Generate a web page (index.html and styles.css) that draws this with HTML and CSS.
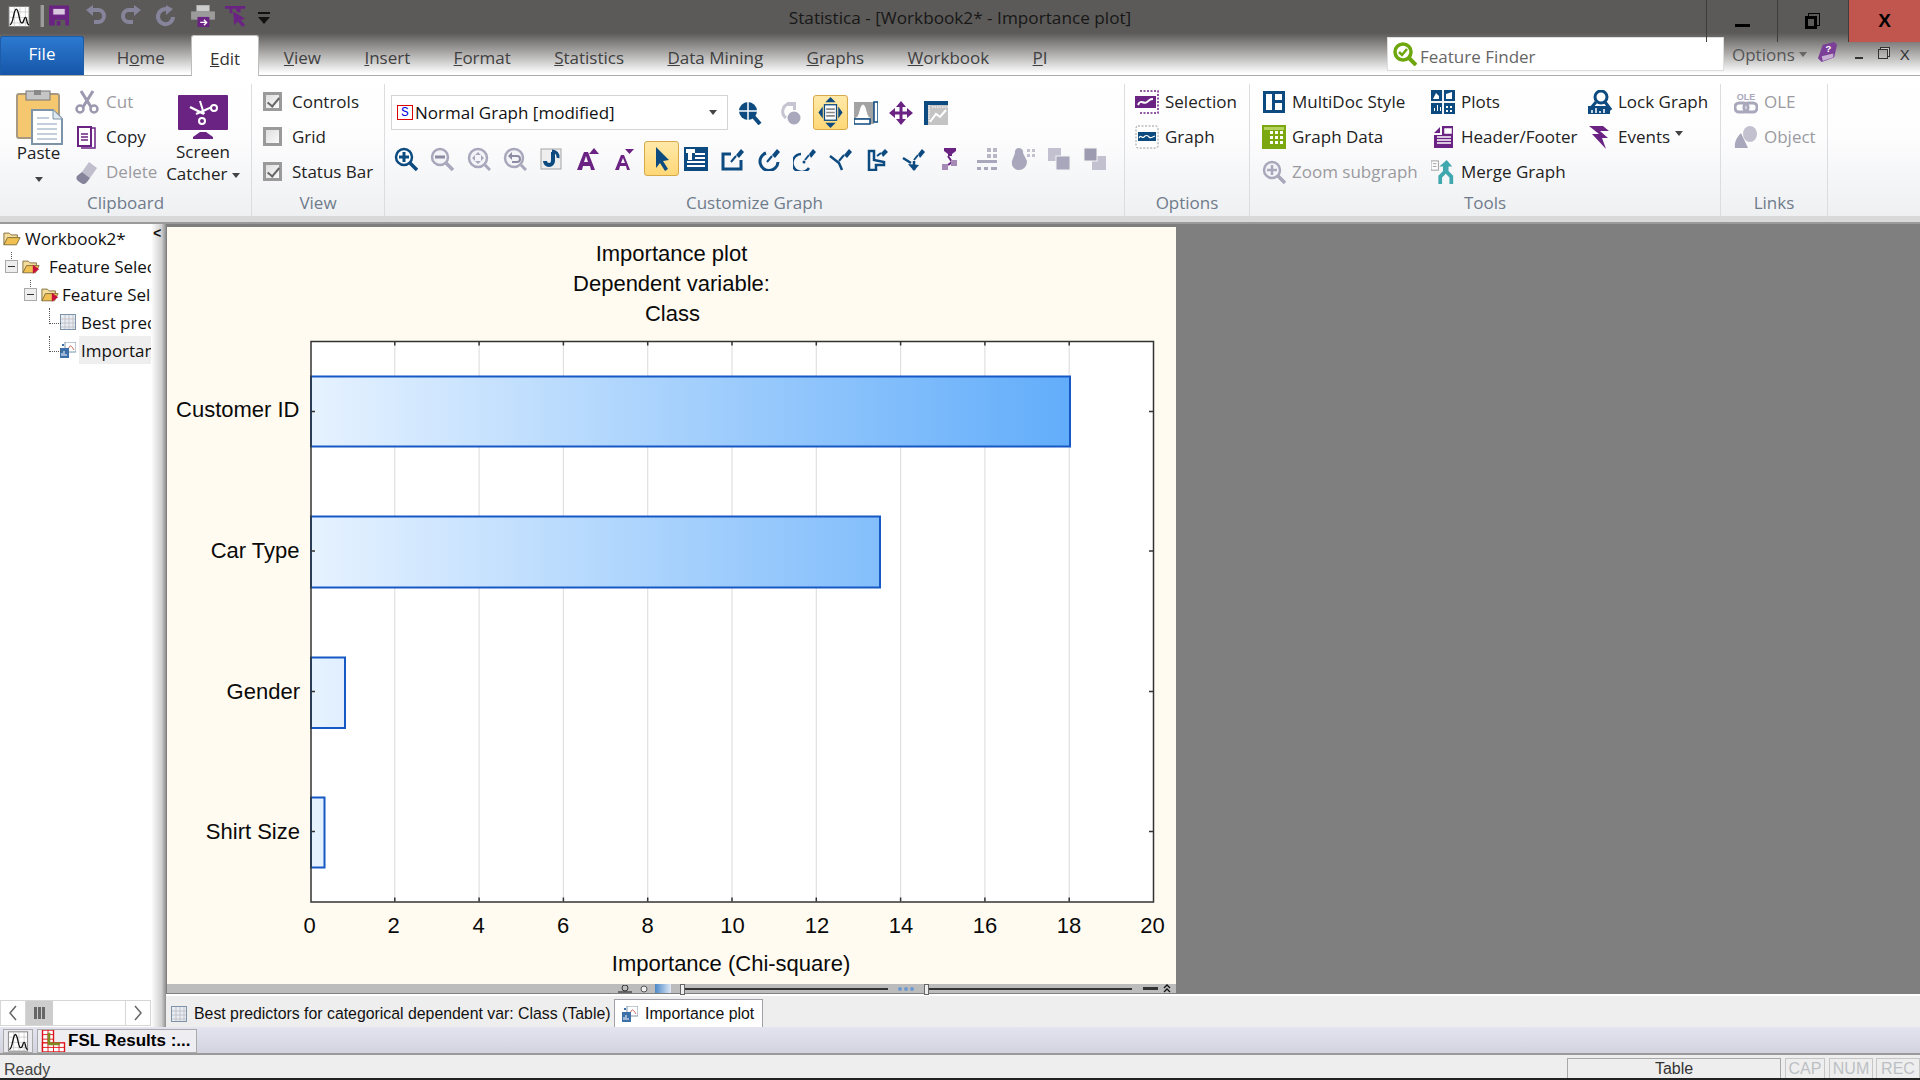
FILE: index.html
```html
<!DOCTYPE html>
<html lang="en">
<head>
    <meta charset="UTF-8">
    <title>Statistica - [Workbook2* - Importance plot]</title>
    <link rel="stylesheet" href="styles.css">
</head>
<body>

<!-- icon sheet -->
<svg class="icon-sheet" xmlns="http://www.w3.org/2000/svg">
    <defs>
        <symbol id="i-logo" viewBox="0 0 24 24"><rect x="1" y="1" width="22" height="22" fill="#fff" stroke="#777"/><path d="M1 7h22M1 13h22M1 19h22M7 1v22M13 1v22M19 1v22" stroke="#bbb" stroke-width=".7"/><path d="M2 21c4 0 4-17 7-17s3 15 6 15 2-6 4-6 1 8 4 8" fill="none" stroke="#111" stroke-width="1.5"/></symbol>
        <symbol id="i-save" viewBox="0 0 22 22"><path d="M0 0h21v21h-4v-6H6v6H0z" fill="#6a2382"/><rect x="4" y="3" width="13" height="7" fill="#d9c8e0" stroke="#6a2382"/><rect x="8" y="16" width="4" height="5" fill="#6a2382"/></symbol>
        <symbol id="i-undo" viewBox="0 0 22 22"><path d="M6 5h7a6 6 0 0 1 0 12H9" fill="none" stroke="#86849a" stroke-width="4"/><path d="M8 0v11L1 5z" fill="#86849a"/></symbol>
        <symbol id="i-redo" viewBox="0 0 22 22"><path d="M16 5H9a6 6 0 0 0 0 12h4" fill="none" stroke="#86849a" stroke-width="4"/><path d="M14 0v11l7-6z" fill="#86849a"/></symbol>
        <symbol id="i-refresh" viewBox="0 0 22 22"><path d="M14 5a7.500 7.500 0 1 0 4 7" fill="none" stroke="#86849a" stroke-width="4"/><path d="M11 0v10l7-6z" fill="#86849a"/></symbol>
        <symbol id="i-print" viewBox="0 0 26 24"><rect x="6" y="0" width="14" height="7" fill="#ccc" stroke="#999"/><rect x="0" y="7" width="26" height="9" fill="#9b9b9b"/><rect x="7" y="13" width="13" height="11" fill="#6a2382"/><path d="M10 19h6M14 16l3 3-3 3" stroke="#fff" stroke-width="1.500" fill="none"/></symbol>
        <symbol id="i-catch" viewBox="0 0 24 24"><path d="M0 1h22v3h-5v4h-3l-2-2v-2H8v5H5V4H0z" fill="#6a2382"/><path d="M9 7l13 8-5 1 5 6-3 2-5-6-4 4z" fill="#6a2382"/></symbol>
        <symbol id="i-drop" viewBox="0 0 14 14"><rect x="1" y="1" width="12" height="2" fill="#111"/><path d="M1 6h12l-6 7z" fill="#111"/></symbol>
        <symbol id="i-cut" viewBox="0 0 24 24"><path d="M6 1l10 16M18 1L8 17" stroke="#9b98b0" stroke-width="3"/><circle cx="5" cy="19" r="3.500" fill="#fff" stroke="#9b98b0" stroke-width="2.500"/><circle cx="19" cy="19" r="3.500" fill="#fff" stroke="#9b98b0" stroke-width="2.500"/></symbol>
        <symbol id="i-copy" viewBox="0 0 24 24"><path d="M6 3h14v20H6" fill="none" stroke="#6a2382" stroke-width="1.500"/><path d="M3 2h9l4 0v19H3z" fill="#fff" stroke="#6a2382" stroke-width="2"/><path d="M6 9h7M6 12h7M6 15h7" stroke="#6a2382" stroke-width="1.500"/></symbol>
        <symbol id="i-delete" viewBox="0 0 24 24"><path d="M14 2l8 6-7 10-8-6z" fill="#c0bdcc"/><path d="M7 12l8 6-3 4a4 4 0 0 1-6 1l-3-2a4 4 0 0 1-1-5z" fill="#86849a"/></symbol>
        <symbol id="i-paste" viewBox="0 0 48 55"><rect x="2" y="4" width="42" height="44" rx="2" fill="#f5c870" stroke="#a89a80" stroke-width="2"/><rect x="11" y="1" width="24" height="9" fill="#c5c5c5" stroke="#777"/><rect x="19" y="0" width="7" height="5" fill="#888"/><path d="M17 20h21l9 9v25H17z" fill="#fff" stroke="#7d94a8" stroke-width="2"/><path d="M38 20v9h9" fill="#dfe8ef" stroke="#7d94a8"/><path d="M22 28h12M22 34h20M22 39h20M22 44h20M22 49h20" stroke="#c3cfdb" stroke-width="2"/></symbol>
        <symbol id="i-screen" viewBox="0 0 50 44"><rect x="0" y="0" width="50" height="35" rx="1" fill="#6a2382"/><path d="M22 6l4 13M34 12l-16 7" stroke="#fff" stroke-width="2"/><path d="M12 12l14 7" stroke="#fff" stroke-width="2.500"/><circle cx="36" cy="13" r="3" fill="#6a2382" stroke="#fff" stroke-width="2"/><circle cx="24" cy="26" r="3" fill="#6a2382" stroke="#fff" stroke-width="2"/><path d="M22 37h6l7 5v2H15v-2z" fill="#6a2382"/></symbol>
        <symbol id="i-zoomin" viewBox="0 0 24 24"><circle cx="10" cy="10" r="8" fill="#fff" stroke="#0d4a80" stroke-width="2.500"/><path d="M10 5v10M5 10h10" stroke="#0d4a80" stroke-width="3"/><path d="M16 16l7 7" stroke="#0d4a80" stroke-width="3.500"/></symbol>
        <symbol id="i-zoomout" viewBox="0 0 24 24"><circle cx="10" cy="10" r="8" fill="#f4f4f8" stroke="#a9a7bb" stroke-width="2.500"/><path d="M5 10h10" stroke="#8d8ba2" stroke-width="3"/><path d="M16 16l7 7" stroke="#a9a7bb" stroke-width="3.500"/></symbol>
        <symbol id="i-zoomfit" viewBox="0 0 24 24"><circle cx="11" cy="11" r="9" fill="#f4f4f8" stroke="#a9a7bb" stroke-width="2.500"/><path d="M11 5l3 3h-6zM11 17l3-3h-6zM5 11l3-3v6zM17 11l-3-3v6z" fill="#a9a7bb"/><path d="M18 18l5 5" stroke="#a9a7bb" stroke-width="3"/></symbol>
        <symbol id="i-zoomback" viewBox="0 0 24 24"><circle cx="11" cy="11" r="9" fill="#f4f4f8" stroke="#a9a7bb" stroke-width="2.500"/><path d="M7 9h7a3 3 0 0 1 0 6H9" fill="none" stroke="#8d8ba2" stroke-width="2"/><path d="M9 5v8L5 9z" fill="#8d8ba2"/><path d="M18 18l5 5" stroke="#a9a7bb" stroke-width="3"/></symbol>
        <symbol id="i-hook" viewBox="0 0 24 24"><rect x="2" y="2" width="20" height="20" fill="#eee" stroke="#a5a5a5"/><path d="M14 5v9a4 4 0 0 1-8 0" fill="none" stroke="#0d4a80" stroke-width="4"/><path d="M13 4a6 6 0 0 1 6 7" fill="none" stroke="#0d4a80" stroke-width="3"/></symbol>
        <symbol id="i-aup" viewBox="0 0 24 24"><path d="M18 1l5 6H13z" fill="#6a2382"/><path d="M1 23L8 5h4l7 18h-4l-1-4H7l-1 4zM8 15h4l-2-6z" fill="#6a2382" fill-rule="evenodd"/></symbol>
        <symbol id="i-adown" viewBox="0 0 24 24"><path d="M13 2h9l-4.500 5z" fill="#6a2382"/><path d="M3 23L9 8h3l6 15h-3l-1-4H8l-1 4zM9 16h4l-2-5z" fill="#6a2382" fill-rule="evenodd"/></symbol>
        <symbol id="i-arrow" viewBox="0 0 24 24"><path d="M6 0l13 13-6 1 5 8-3 2-5-8-4 5z" fill="#0d4a80"/></symbol>
        <symbol id="i-textbox" viewBox="0 0 24 24"><rect x="0" y="0" width="24" height="24" fill="#0d4a80"/><path d="M3 3h7v2H7v7H5V5H3zM11 7h10M11 11h10M3 15h18M3 19h18" stroke="#fff" stroke-width="2" fill="#fff"/></symbol>
        <symbol id="i-rect" viewBox="0 0 24 24"><path d="M10 7H2v15h18v-9" fill="none" stroke="#0d4a80" stroke-width="3"/><path d="M10 15l5-6" stroke="#0d4a80" stroke-width="2"/><path d="M15 8l5-6 3 3-5 6z" fill="#0d4a80"/></symbol>
        <symbol id="i-circle" viewBox="0 0 24 24"><path d="M9 6a9 9 0 1 0 12 9" fill="none" stroke="#0d4a80" stroke-width="3"/><path d="M10 15l5-6" stroke="#0d4a80" stroke-width="2"/><path d="M15 8l5-6 3 3-5 6z" fill="#0d4a80"/></symbol>
        <symbol id="i-arc" viewBox="0 0 24 24"><path d="M8 7a9 9 0 1 0 8 14" fill="none" stroke="#0d4a80" stroke-width="2.500"/><circle cx="11" cy="15" r="1.500" fill="#0d4a80"/><path d="M12 13l4-5" stroke="#0d4a80" stroke-width="2"/><path d="M16 7l4-5 3 3-5 6z" fill="#0d4a80"/></symbol>
        <symbol id="i-line" viewBox="0 0 24 24"><path d="M1 9l9 7 3 7" fill="none" stroke="#0d4a80" stroke-width="2.500"/><path d="M10 14l5-6" stroke="#0d4a80" stroke-width="2"/><path d="M15 8l5-6 3 3-5 6z" fill="#0d4a80"/></symbol>
        <symbol id="i-poly" viewBox="0 0 24 24"><path d="M3 4h5v9l10 2v3l-8 0v5H3z" fill="none" stroke="#0d4a80" stroke-width="2.500"/><path d="M11 9l4-3" stroke="#0d4a80" stroke-width="2"/><path d="M15 6l4-4 3 3-5 5z" fill="#0d4a80"/></symbol>
        <symbol id="i-arrowline" viewBox="0 0 24 24"><path d="M1 11l8 5M12 23V14" fill="none" stroke="#0d4a80" stroke-width="2.500"/><path d="M6 17l6 7 5-6z" fill="#0d4a80"/><path d="M12 13l4-5" stroke="#0d4a80" stroke-width="2"/><path d="M16 7l4-5 3 3-5 6z" fill="#0d4a80"/></symbol>
        <symbol id="i-group" viewBox="0 0 24 24"><path d="M6 1h12v3l-4 3v2h-4V7L6 4z" fill="#6a2382"/><path d="M10 9l4 6-4 3" fill="none" stroke="#6a2382" stroke-width="2"/><rect x="4" y="17" width="6" height="6" fill="#a58bb5"/><rect x="13" y="13" width="6" height="6" fill="#a58bb5"/></symbol>
        <symbol id="i-align" viewBox="0 0 24 24"><rect x="12" y="1" width="4" height="4" fill="#b9b7c6"/><rect x="18" y="1" width="4" height="4" fill="#b9b7c6"/><rect x="12" y="7" width="4" height="4" fill="#b9b7c6"/><rect x="18" y="7" width="4" height="4" fill="#b9b7c6"/><rect x="2" y="13" width="20" height="3" fill="#a9a7bb"/><path d="M2 20h4v3H2zM9 20h4v3H9zM16 20h6v3h-6z" fill="#a9a7bb"/></symbol>
        <symbol id="i-lasso" viewBox="0 0 24 24"><path d="M8 1a4 4 0 0 1 4 5l4 8c0 6-4 9-8 9s-8-3-7-9l3-8a4 4 0 0 1 4-5z" fill="#a9a7bb"/><path d="M16 2h3v3h-3zM21 2h3v3h-3zM16 7h3v3h-3zM21 7h3v3h-3z" fill="#c3c1cf"/></symbol>
        <symbol id="i-front" viewBox="0 0 24 24"><rect x="1" y="1" width="13" height="13" fill="#c3c1cf"/><rect x="9" y="9" width="14" height="14" fill="#a9a7bb" stroke="#f4f4f4"/></symbol>
        <symbol id="i-back" viewBox="0 0 24 24"><rect x="9" y="9" width="14" height="14" fill="#c3c1cf"/><rect x="1" y="1" width="13" height="13" fill="#9d9bb0" stroke="#f4f4f4"/></symbol>
        <symbol id="i-points" viewBox="0 0 24 24"><circle cx="10" cy="10" r="9" fill="#0d4a80"/><path d="M10 1v18M1 10h18" stroke="#fff" stroke-width="1.500"/><path d="M15 15l7 8" stroke="#0d4a80" stroke-width="4"/></symbol>
        <symbol id="i-gray-rot" viewBox="0 0 24 24"><path d="M9 3a8 8 0 0 0-2 14" fill="none" stroke="#c7c5d2" stroke-width="3"/><path d="M8 1h9v8h-3V5H8z" fill="#c7c5d2"/><circle cx="15" cy="17" r="6.500" fill="#a9a7bb"/></symbol>
        <symbol id="i-move" viewBox="0 0 28 36"><path d="M14 0l6 6H8zM14 36l-6-6h12z" fill="#0d4a80"/><path d="M5 11v14l-5-7zM23 11v14l5-7z" fill="#0d4a80"/><rect x="7" y="9" width="14" height="18" fill="#fff" stroke="#0d4a80" stroke-width="1.500"/><path d="M9 14h10M9 18h10M9 22h10" stroke="#888" stroke-width="2"/></symbol>
        <symbol id="i-plotbox" viewBox="0 0 24 24"><rect x="0" y="1" width="20" height="22" fill="#a3a3a3"/><path d="M2 17c4 0 4-13 7-13s3 13 7 13" fill="#fff" stroke="#fff" stroke-width="1"/><rect x="0" y="18" width="16" height="5" fill="#fff" stroke="#0d4a80" stroke-width="1.500"/><rect x="20" y="1" width="4" height="20" fill="#fff" stroke="#0d4a80" stroke-width="1.500"/></symbol>
        <symbol id="i-cross" viewBox="0 0 24 24"><path d="M12 0l5 6H7zM12 24l-5-6h10zM0 12l6-5v10zM24 12l-6-5v10z" fill="#6a2382"/><path d="M12 4v16M4 12h16" stroke="#6a2382" stroke-width="3"/></symbol>
        <symbol id="i-area" viewBox="0 0 24 24"><rect x="0" y="0" width="24" height="24" fill="#0d4a80"/><rect x="4" y="4" width="20" height="20" fill="#c4c4c4"/><path d="M5 4v16M8 6h16" stroke="#fff" stroke-width="1" stroke-dasharray="1.500 1"/><path d="M6 21l6-8 4 3 6-7" fill="none" stroke="#fff" stroke-width="2"/></symbol>
        <symbol id="i-select" viewBox="0 0 24 24"><rect x="0" y="6" width="21" height="12" fill="#6a2382"/><path d="M3 15c3-7 5 0 9-3s3-3 6-3" fill="none" stroke="#fff" stroke-width="2"/><path d="M5 1h18v22H5" fill="none" stroke="#6a2382" stroke-width="1.500" stroke-dasharray="2 1.500"/></symbol>
        <symbol id="i-graph" viewBox="0 0 24 24"><rect x="1" y="1" width="22" height="22" rx="2" fill="#fff" stroke="#999" stroke-dasharray="2 1.500"/><rect x="3" y="7" width="18" height="9" fill="#0d4a80"/><path d="M4 13c2-4 3 1 5-1s3-2 5 0 3 0 6-1" fill="none" stroke="#fff" stroke-width="1.200"/></symbol>
        <symbol id="i-multidoc" viewBox="0 0 24 24"><rect x="1" y="1" width="22" height="22" fill="#0d4a80"/><rect x="4" y="4" width="6" height="16" fill="#fff"/><rect x="13" y="4" width="7" height="6" fill="#fff"/><rect x="13" y="13" width="7" height="7" fill="#fff"/></symbol>
        <symbol id="i-gdata" viewBox="0 0 24 24"><rect x="0" y="0" width="24" height="24" fill="#7ba811"/><rect x="2" y="2" width="20" height="3" fill="#b6d25e"/><path d="M8 6h3v3H8zM13 6h3v3h-3zM18 6h3v3h-3zM8 11h3v3H8zM13 11h3v3h-3zM18 11h3v3h-3zM8 16h3v3H8zM13 16h3v3h-3zM18 16h3v3h-3z" fill="#fff"/></symbol>
        <symbol id="i-zoomsub" viewBox="0 0 24 24"><circle cx="10" cy="10" r="8" fill="#f4f4f8" stroke="#a9a7bb" stroke-width="2.500"/><path d="M10 5v10M5 10h10" stroke="#a9a7bb" stroke-width="2.500"/><path d="M16 16l7 7" stroke="#a9a7bb" stroke-width="3.500"/></symbol>
        <symbol id="i-plots" viewBox="0 0 24 24"><rect x="0" y="0" width="24" height="24" fill="#0d4a80"/><path d="M11 0h2v24h-2zM0 11h24v2H0z" fill="#f3f3f5"/><path d="M2 9l3-6 3 3V9zM15 4l6-2v7h-6zM3 21v-3h1v3zM6 21v-6h1v6zM9 21v-4h1v4zM15 16h2v2h-2zM19 16h2v2h-2zM15 20h2v2h-2zM19 20h2v2h-2z" fill="#fff"/></symbol>
        <symbol id="i-header" viewBox="0 0 24 24"><path d="M3 8L9 2v6zM11 1h11v22H3V10h8z" fill="#6a2382"/><path d="M14 4h6v4h-6zM6 12h14M6 15h14M6 18h14" stroke="#fff" fill="#fff" stroke-width="1.500"/></symbol>
        <symbol id="i-merge" viewBox="0 0 26 26"><rect x="0" y="1" width="8" height="10" fill="#fff" stroke="#999"/><path d="M2 4h4M2 7h4" stroke="#999"/><path d="M17 0l6 7h-4v5l5 5v9h-4v-7l-4-4-4 4v7H8v-9l5-5V7H9z" fill="#3fa7ae"/></symbol>
        <symbol id="i-lock" viewBox="0 0 24 24"><circle cx="13" cy="7" r="6" fill="#fff" stroke="#0d4a80" stroke-width="3"/><path d="M8 12l-5 6M17 12l6 8" stroke="#0d4a80" stroke-width="3"/><rect x="0" y="16" width="22" height="8" fill="#0d4a80"/><path d="M4 23v-3M8 23v-5M12 23v-2M16 23v-4" stroke="#fff" stroke-width="1.500"/></symbol>
        <symbol id="i-events" viewBox="0 0 24 24"><path d="M1 1h14l6 5-9 0 8 7-6 0 4 11-14-15h7z" fill="#6a2382"/></symbol>
        <symbol id="i-ole" viewBox="0 0 24 24"><text x="12" y="10" text-anchor="middle" class="icon-text">OLE</text><rect x="1" y="13" width="13" height="9" rx="4" fill="none" stroke="#a9a7bb" stroke-width="3"/><rect x="10" y="13" width="13" height="9" rx="4" fill="none" stroke="#a9a7bb" stroke-width="3"/></symbol>
        <symbol id="i-object" viewBox="0 0 24 24"><path d="M7 8l7 15H1c-1-6 2-11 6-15z" fill="#a9a7bb"/><ellipse cx="16" cy="9" rx="7" ry="8" fill="#c3c1cf"/></symbol>
        <symbol id="i-finder" viewBox="0 0 24 24"><circle cx="10" cy="10" r="8" fill="#fff" stroke="#6ea60e" stroke-width="3.500"/><path d="M6 10l3 3 5-6" fill="none" stroke="#6ea60e" stroke-width="2.500"/><path d="M16 16l7 7" stroke="#6ea60e" stroke-width="4"/></symbol>
        <symbol id="i-help" viewBox="0 0 22 22"><path d="M6 3l12-3 3 3-3 13-13 5-4-4z" fill="#7b3f97"/><path d="M5 15l12-3 0 4-11 4z" fill="#c8afd4"/><text x="12" y="10" text-anchor="middle" class="icon-help">?</text></symbol>
        <symbol id="i-folder" viewBox="0 0 20 16"><path d="M1 15V2h6l2 2h7v3" fill="#f4dc9c" stroke="#7d6a3a"/><path d="M1 15l4-8h14l-4 8z" fill="#f0c050" stroke="#7d6a3a"/></symbol>
        <symbol id="i-folder-run" viewBox="0 0 20 16"><path d="M1 15V2h6l2 2h7v3" fill="#f4dc9c" stroke="#7d6a3a"/><path d="M1 15l4-8h14l-4 8z" fill="#f0c050" stroke="#7d6a3a"/><path d="M12 6l7 5-7 5z" fill="#c8103c"/></symbol>
        <symbol id="i-sheet" viewBox="0 0 16 16"><rect x=".5" y=".5" width="15" height="15" fill="#e8edf3" stroke="#7d94a8"/><path d="M5 1v14M9 1v14M13 1v14M1 5h14M1 9h14M1 13h14" stroke="#c3c3c8"/></symbol>
        <symbol id="i-doc-graph" viewBox="0 0 16 16"><rect x="5" y="0" width="11" height="10" fill="#fff" stroke="#7d94a8"/><path d="M8 8c2-6 3-5 6 0" fill="none" stroke="#d0685a"/><rect x="0" y="6" width="9" height="10" fill="#3d6fa8"/><path d="M2 14v-3M4 14v-5M6 14v-2" stroke="#fff"/><path d="M2 2h2v2H2z" fill="#3d6fa8"/></symbol>
        <symbol id="i-results" viewBox="0 0 24 24"><rect x="0" y="0" width="12" height="24" fill="#fff" stroke="#e0101a" stroke-width="1.500"/><rect x="0" y="14" width="24" height="10" fill="#fff" stroke="#e0101a" stroke-width="1.500"/><path d="M0 5h12M0 10h12M0 19h24M6 0v24M12 14v10M18 14v10" stroke="#e0101a"/><path d="M7 3v12h12" fill="none" stroke="#7c8a22" stroke-width="3"/></symbol>
    </defs>
</svg>

<div class="app">

    <div class="top">
        <div class="title-row">
            <div class="qat">
                <svg class="qat-logo"><use href="#i-logo"/></svg>
                <span class="qat-sep"></span>
                <svg class="qat-icon save"><use href="#i-save"/></svg>
                <svg class="qat-icon"><use href="#i-undo"/></svg>
                <svg class="qat-icon"><use href="#i-redo"/></svg>
                <svg class="qat-icon"><use href="#i-refresh"/></svg>
                <svg class="qat-icon print"><use href="#i-print"/></svg>
                <svg class="qat-icon"><use href="#i-catch"/></svg>
                <svg class="qat-drop"><use href="#i-drop"/></svg>
            </div>
            <div class="title">Statistica - [Workbook2* - Importance plot]</div>
            <div class="win-controls">
                <div class="win-btn"><span class="win-min"></span></div>
                <div class="win-btn"><span class="win-restore"></span></div>
                <div class="win-btn close">X</div>
            </div>
        </div>
        <div class="tab-row">
            <div class="file-tab">File</div>
            <div class="tab">H<u>o</u>me</div>
            <div class="tab active"><u>E</u>dit</div>
            <div class="tab"><u>V</u>iew</div>
            <div class="tab"><u>I</u>nsert</div>
            <div class="tab"><u>F</u>ormat</div>
            <div class="tab"><u>S</u>tatistics</div>
            <div class="tab"><u>D</u>ata Mining</div>
            <div class="tab"><u>G</u>raphs</div>
            <div class="tab"><u>W</u>orkbook</div>
            <div class="tab"><u>P</u>I</div>
            <div class="finder">
                <svg class="finder-icon"><use href="#i-finder"/></svg>
                <span>Feature Finder</span>
            </div>
            <div class="options">
                <span>Options</span><span class="caret small"></span>
                <svg class="help-icon"><use href="#i-help"/></svg>
                <span class="mini-min"></span>
                <span class="mini-restore"></span>
                <span class="mini-close">X</span>
            </div>
        </div>
    </div>

    <div class="ribbon">

        <div class="group clipboard">
            <div class="group-body">
                <div class="big-btn paste">
                    <svg class="paste-icon"><use href="#i-paste"/></svg>
                    <div class="big-label">Paste</div>
                    <span class="caret below"></span>
                </div>
                <div class="cmd-col clip-col">
                    <div class="cmd off"><svg class="ic"><use href="#i-cut"/></svg>Cut</div>
                    <div class="cmd"><svg class="ic"><use href="#i-copy"/></svg>Copy</div>
                    <div class="cmd off"><svg class="ic"><use href="#i-delete"/></svg>Delete</div>
                </div>
                <div class="big-btn catcher">
                    <svg class="screen-icon"><use href="#i-screen"/></svg>
                    <div class="big-label">Screen</div>
                    <div class="big-label">Catcher <span class="caret"></span></div>
                </div>
            </div>
            <div class="group-label">Clipboard</div>
        </div>

        <div class="group view">
            <div class="group-body">
                <div class="cmd-col">
                    <div class="cmd"><span class="check on"></span>Controls</div>
                    <div class="cmd"><span class="check"></span>Grid</div>
                    <div class="cmd"><span class="check on"></span>Status Bar</div>
                </div>
            </div>
            <div class="group-label">View</div>
        </div>

        <div class="group customize">
            <div class="group-body stacked">
                <div class="tool-row first">
                    <div class="graph-select">
                        <span class="s-badge">S</span>Normal Graph [modified]
                        <span class="caret push"></span>
                    </div>
                    <div class="tools wide">
                        <div class="tool slot"><svg><use href="#i-points"/></svg></div>
                        <div class="tool slot"><svg><use href="#i-gray-rot"/></svg></div>
                        <div class="tool active"><svg class="tall"><use href="#i-move"/></svg></div>
                        <div class="tool"><svg><use href="#i-plotbox"/></svg></div>
                        <div class="tool"><svg><use href="#i-cross"/></svg></div>
                        <div class="tool"><svg><use href="#i-area"/></svg></div>
                    </div>
                </div>
                <div class="tools second">
                    <div class="tool"><svg><use href="#i-zoomin"/></svg></div>
                    <div class="tool"><svg><use href="#i-zoomout"/></svg></div>
                    <div class="tool"><svg><use href="#i-zoomfit"/></svg></div>
                    <div class="tool"><svg><use href="#i-zoomback"/></svg></div>
                    <div class="tool"><svg><use href="#i-hook"/></svg></div>
                    <div class="tool"><svg><use href="#i-aup"/></svg></div>
                    <div class="tool"><svg><use href="#i-adown"/></svg></div>
                    <div class="tool active"><svg><use href="#i-arrow"/></svg></div>
                    <div class="tool"><svg><use href="#i-textbox"/></svg></div>
                    <div class="tool"><svg><use href="#i-rect"/></svg></div>
                    <div class="tool"><svg><use href="#i-circle"/></svg></div>
                    <div class="tool"><svg><use href="#i-arc"/></svg></div>
                    <div class="tool"><svg><use href="#i-line"/></svg></div>
                    <div class="tool"><svg><use href="#i-poly"/></svg></div>
                    <div class="tool"><svg><use href="#i-arrowline"/></svg></div>
                    <div class="tool"><svg><use href="#i-group"/></svg></div>
                    <div class="tool"><svg><use href="#i-align"/></svg></div>
                    <div class="tool"><svg><use href="#i-lasso"/></svg></div>
                    <div class="tool"><svg><use href="#i-front"/></svg></div>
                    <div class="tool"><svg><use href="#i-back"/></svg></div>
                </div>
            </div>
            <div class="group-label">Customize Graph</div>
        </div>

        <div class="group options-group">
            <div class="group-body">
                <div class="cmd-col">
                    <div class="cmd"><svg class="ic"><use href="#i-select"/></svg>Selection</div>
                    <div class="cmd"><svg class="ic"><use href="#i-graph"/></svg>Graph</div>
                </div>
            </div>
            <div class="group-label">Options</div>
        </div>

        <div class="group tools-group">
            <div class="group-body">
                <div class="cmd-col col-a">
                    <div class="cmd"><svg class="ic"><use href="#i-multidoc"/></svg>MultiDoc Style</div>
                    <div class="cmd"><svg class="ic"><use href="#i-gdata"/></svg>Graph Data</div>
                    <div class="cmd off"><svg class="ic"><use href="#i-zoomsub"/></svg>Zoom subgraph</div>
                </div>
                <div class="cmd-col col-b">
                    <div class="cmd"><svg class="ic"><use href="#i-plots"/></svg>Plots</div>
                    <div class="cmd"><svg class="ic"><use href="#i-header"/></svg>Header/Footer</div>
                    <div class="cmd"><svg class="ic"><use href="#i-merge"/></svg>Merge Graph</div>
                </div>
                <div class="cmd-col">
                    <div class="cmd"><svg class="ic"><use href="#i-lock"/></svg>Lock Graph</div>
                    <div class="cmd"><svg class="ic"><use href="#i-events"/></svg>Events <span class="caret after"></span></div>
                </div>
            </div>
            <div class="group-label">Tools</div>
        </div>

        <div class="group links">
            <div class="group-body">
                <div class="cmd-col">
                    <div class="cmd off"><svg class="ic"><use href="#i-ole"/></svg>OLE</div>
                    <div class="cmd off"><svg class="ic"><use href="#i-object"/></svg>Object</div>
                </div>
            </div>
            <div class="group-label">Links</div>
        </div>
    </div>

    <div class="main">
        <div class="tree-pane">
            <div class="tree">
                <div class="tree-row lvl0"><svg class="node-icon"><use href="#i-folder"/></svg>Workbook2*</div>
                <div class="tree-row lvl1"><span class="expander"></span><svg class="node-icon"><use href="#i-folder-run"/></svg><span class="gap"></span>Feature Selection</div>
                <div class="tree-row lvl2"><span class="expander"></span><svg class="node-icon"><use href="#i-folder-run"/></svg>Feature Selection</div>
                <div class="tree-row lvl3"><svg class="leaf-icon"><use href="#i-sheet"/></svg>Best predictors</div>
                <div class="tree-row lvl3 last selected"><svg class="leaf-icon"><use href="#i-doc-graph"/></svg>Importance plot</div>
            </div>
            <div class="hscroll">
                <span class="hs-btn"><svg class="hs-arrow" viewBox="0 0 10 16"><path d="M8 1L2 8l6 7" fill="none" stroke="#666" stroke-width="1.500"/></svg></span>
                <span class="hs-thumb"><i></i><i></i><i></i></span>
                <span class="hs-track"></span>
                <span class="hs-btn"><svg class="hs-arrow" viewBox="0 0 10 16"><path d="M2 1l6 7-6 7" fill="none" stroke="#666" stroke-width="1.500"/></svg></span>
            </div>
        </div>

        <div class="sash"><span class="sash-mark">&lt;</span></div>

        <div class="work-col">
            <div class="workspace">
                <div class="doc">
                    <svg class="chart" viewBox="167 228 1009 756">
                        <defs>
                            <linearGradient id="barfill" gradientUnits="userSpaceOnUse" x1="311" y1="0" x2="1070" y2="0">
                                <stop offset="0" stop-color="#e6f2ff"/>
                                <stop offset="1" stop-color="#62adfa"/>
                            </linearGradient>
                        </defs>
                        <rect x="311" y="342" width="842.500" height="560.500" fill="#fff"/>
                        <g id="grid" stroke="#e0e0e0" stroke-width="1.200">
                            <path d="M394.800 342v560M479.100 342v560M563.400 342v560M647.700 342v560M732 342v560M816.300 342v560M900.600 342v560M984.900 342v560M1069.200 342v560"/>
                        </g>
                        <g stroke="#1659c5" stroke-width="2" fill="url(#barfill)">
                            <rect x="311" y="377" width="759" height="70"/>
                            <rect x="311" y="517" width="569" height="71"/>
                            <rect x="311" y="658" width="34" height="70.500"/>
                            <rect x="311" y="798" width="13.500" height="70"/>
                        </g>
                        <rect x="311" y="342" width="842.500" height="560.500" fill="none" stroke="#333" stroke-width="1.500"/>
                        <path stroke="#333" stroke-width="1.500" d="M394.800 342v4M479.100 342v4M563.400 342v4M647.700 342v4M732 342v4M816.300 342v4M900.600 342v4M984.900 342v4M1069.200 342v4M1153 412h-4M1153 551.500h-4M1153 692h-4M1153 832h-4"/>
                        <path stroke="#333" stroke-width="1.500" d="M311 412h4M311 551.500h4M311 692h4M311 832h4M394.800 902v-4M479.100 902v-4M563.400 902v-4M647.700 902v-4M732 902v-4M816.300 902v-4M900.600 902v-4M984.900 902v-4M1069.200 902v-4"/>
                        <g class="chart-text" text-anchor="middle">
                            <text x="671.500" y="261">Importance plot</text>
                            <text x="671.500" y="291">Dependent variable:</text>
                            <text x="672.500" y="321">Class</text>
                            <text x="731" y="971">Importance (Chi-square)</text>
                            <text x="309.500" y="933">0</text>
                            <text x="393.500" y="933">2</text>
                            <text x="478.500" y="933">4</text>
                            <text x="563" y="933">6</text>
                            <text x="647.500" y="933">8</text>
                            <text x="732.500" y="933">10</text>
                            <text x="817" y="933">12</text>
                            <text x="901" y="933">14</text>
                            <text x="985" y="933">16</text>
                            <text x="1069" y="933">18</text>
                            <text x="1152.500" y="933">20</text>
                        </g>
                        <g class="chart-text" text-anchor="end">
                            <text x="299.500" y="417">Customer ID</text>
                            <text x="299.500" y="558">Car Type</text>
                            <text x="300" y="699">Gender</text>
                            <text x="300" y="839">Shirt Size</text>
                        </g>
                    </svg>
                    <div class="doc-bar">
                        <svg class="bar-tool" viewBox="0 0 16 8"><circle cx="8" cy="3" r="3" fill="none" stroke="#333"/><path d="M1 7h14" stroke="#111"/></svg>
                        <svg class="bar-tool small" viewBox="0 0 8 8"><circle cx="4" cy="4" r="3" fill="#eee" stroke="#555"/></svg>
                        <span class="bar-grad"></span>
                        <span class="bar-slider"></span>
                        <span class="bar-dots"><i></i><i></i><i></i></span>
                        <span class="bar-slider"></span>
                        <span class="bar-end"></span>
                        <svg class="bar-chev" viewBox="0 0 8 9"><path d="M1 4l3-3 3 3M1 8l3-3 3 3" fill="none" stroke="#111" stroke-width="1.300"/></svg>
                    </div>
                </div>
            </div>
            <div class="doc-tabs">
                <div class="doc-tab"><svg class="leaf-icon"><use href="#i-sheet"/></svg>Best predictors for categorical dependent var: Class (Table)</div>
                <div class="doc-tab active"><svg class="leaf-icon"><use href="#i-doc-graph"/></svg>Importance plot</div>
            </div>
        </div>
    </div>

    <div class="task-bar">
        <div class="task-btn app-btn"><svg class="task-logo"><use href="#i-logo"/></svg></div>
        <div class="task-btn results-btn"><svg class="task-results"><use href="#i-results"/></svg>FSL Results :...</div>
    </div>

    <div class="status-bar">
        <span class="status-text">Ready</span>
        <span class="status-cell table">Table</span>
        <span class="status-cell lock cap">CAP</span>
        <span class="status-cell lock num">NUM</span>
        <span class="status-cell lock rec">REC</span>
    </div>

</div>

</body>
</html>
```

FILE: styles.css
```css
* {
    box-sizing: border-box;
}
body {
    margin: 0;
    font-family: "Open Sans", "Noto Sans", sans-serif;
    color: #222;
    overflow: hidden;
}
.icon-sheet {
    display: none;
}
.icon-text {
    font: bold 9px "Liberation Sans", sans-serif;
    fill: #a9a7bb;
}
.icon-help {
    font: bold 10px "Liberation Sans", sans-serif;
    fill: #fff;
}
.app {
    width: 1920px;
    height: 1080px;
    display: flex;
    flex-direction: column;
    background: #eee;
}

/* title bar and tabs */
.top {
    height: 76px;
    flex: none;
    background: linear-gradient(#5b5a58 0, #5b5a58 44%, #a9a8a7 70%, #fff 98%);
    border-bottom: 1px solid #ababab;
}
.title-row {
    height: 36px;
    display: grid;
    grid-template-columns: 1fr auto 1fr;
}
.qat {
    display: flex;
    align-items: center;
    padding: 0 0 10px 8px;
}
.qat-logo {
    width: 22px;
    height: 23px;
}
.qat-sep {
    width: 4px;
    height: 22px;
    margin: 0 5px 0 10px;
    background: #9c9c9c;
    border-left: 1px solid #777;
}
.qat-icon {
    width: 22px;
    height: 22px;
    margin-right: 13px;
}
.qat-icon.save {
    width: 21px;
    margin-right: 15px;
}
.qat-icon.print {
    width: 26px;
    margin-right: 9px;
}
.qat-drop {
    width: 14px;
    height: 14px;
    margin: 4px 0 0 -3px;
}
.title {
    padding-top: 6px;
    font-size: 17.200px;
    color: #171717;
}
.win-controls {
    display: flex;
    justify-content: flex-end;
    height: 42px;
    position: relative;
    z-index: 2;
}
.win-btn {
    width: 71px;
    height: 42px;
    display: flex;
    align-items: center;
    justify-content: center;
    border-left: 1px solid #3e3d3c;
    font: bold 19px "Liberation Sans", sans-serif;
    color: #000;
}
.win-btn.close {
    width: 72px;
    background: #c0564e;
}
.win-min {
    width: 15px;
    height: 3px;
    margin-top: 8px;
    background: #000;
}
.win-restore {
    width: 12px;
    height: 13px;
    margin: 3px 5px 0 0;
    border: 3px solid #000;
    box-shadow: 3px -3px 0 -1px #5b5a58, 3px -3px 0 0 #000;
}
.tab-row {
    height: 39px;
    display: flex;
    align-items: flex-end;
    font-size: 17px;
}
.file-tab {
    width: 84px;
    height: 39px;
    margin-right: 11px;
    padding-top: 5px;
    text-align: center;
    color: #fff;
    background: linear-gradient(#2c7ad0, #1656a8);
    border: 1px solid #1c5ca8;
    border-bottom: 0;
    border-radius: 3px 3px 0 0;
}
.tab {
    height: 39px;
    padding: 10px 21.700px 0;
    color: #404040;
}
.tab.active {
    height: 41px;
    margin: 0 3px -1px 4.500px;
    padding: 11px 18px 0;
    color: #333;
    background: #fff;
    border: 1px solid #bdbdbd;
    border-bottom: 0;
    border-radius: 3px 3px 0 0;
    position: relative;
}
.finder {
    width: 337px;
    height: 34px;
    margin: 0 0 4px auto;
    display: flex;
    align-items: center;
    padding: 4px 0 0 5px;
    background: #fff;
    border: 1px solid #ddd;
    color: #666;
}
.finder-icon {
    width: 24px;
    height: 24px;
    margin: -5px 3px 0 0;
}
.options {
    width: 196px;
    height: 34px;
    margin-bottom: 4px;
    padding-left: 8px;
    display: flex;
    align-items: center;
    color: #555;
}
.help-icon {
    width: 21px;
    height: 21px;
    margin: 0 0 4px 10px;
}
.mini-min {
    width: 8px;
    height: 2px;
    margin: 8px 0 0 17px;
    background: #333;
}
.mini-restore {
    width: 10px;
    height: 10px;
    margin-left: 15px;
    border: 1px solid #333;
    box-shadow: 2px -2px 0 -1px #c8c8c8, 2px -2px 0 0 #333;
}
.mini-close {
    margin-left: 12px;
    font: 15px "Liberation Sans", sans-serif;
    color: #333;
}
.caret {
    display: inline-block;
    width: 0;
    height: 0;
    border: 4px solid transparent;
    border-top: 5px solid #444;
    border-bottom: 0;
    vertical-align: middle;
}
.caret.small {
    margin-left: 4px;
    border-top-color: #666;
}

/* ribbon */
.ribbon {
    height: 148px;
    flex: none;
    display: flex;
    padding-top: 8px;
    background: linear-gradient(#fff, #fdfdfe 40%, #eff0f2 96%, #d9d9d9 96%);
    border-bottom: 2px solid #9a9a9a;
    font-size: 17px;
}
.group {
    display: flex;
    flex-direction: column;
    height: 134px;
    border-right: 1px solid #dcdde0;
}
.group-body {
    flex: 1;
    min-height: 0;
    display: flex;
}
.group-label {
    height: 27px;
    flex: none;
    text-align: center;
    color: #6f7b8b;
}
.clipboard {
    width: 252px;
}
.clipboard .group-body {
    padding-left: 2px;
}
.view {
    width: 133px;
}
.view .group-body {
    padding-left: 11px;
}
.customize {
    width: 740px;
}
.options-group {
    width: 125px;
}
.options-group .group-body {
    padding-left: 10px;
}
.tools-group {
    width: 471px;
}
.tools-group .group-body {
    padding-left: 12px;
}
.links {
    width: 107px;
}
.links .group-body {
    padding-left: 13px;
}
.cmd-col {
    display: flex;
    flex-direction: column;
}
.cmd {
    height: 35px;
    display: flex;
    align-items: center;
    white-space: nowrap;
}
.cmd.off {
    color: #9a9a9f;
}
.ic {
    width: 24px;
    height: 24px;
    flex: none;
    margin-right: 6px;
}
.clip-col {
    width: 92px;
}
.clip-col .ic {
    margin-right: 7px;
}
.col-a {
    width: 169px;
}
.col-b {
    width: 157px;
}
.big-btn {
    display: flex;
    flex-direction: column;
    align-items: center;
}
.big-label {
    line-height: 22px;
    white-space: nowrap;
}
.paste {
    width: 73px;
    padding-top: 6px;
}
.paste-icon {
    width: 48px;
    height: 55px;
}
.paste .big-label {
    margin-top: -3px;
}
.caret.below {
    margin-top: 13px;
}
.catcher {
    width: 72px;
    padding-top: 11px;
}
.screen-icon {
    width: 50px;
    height: 44px;
    margin-bottom: 2px;
}
.check {
    width: 19px;
    height: 19px;
    flex: none;
    margin-right: 10px;
    position: relative;
    background: linear-gradient(135deg, #dedede, #fafafa);
    border: 3px solid #9a9a9a;
}
.check.on::after {
    content: "";
    position: absolute;
    left: 4px;
    top: 0;
    width: 5px;
    height: 10px;
    border: solid #666;
    border-width: 0 2px 2px 0;
    transform: rotate(40deg);
}
.stacked {
    flex-direction: column;
    padding-top: 11px;
}
.tool-row {
    display: flex;
    padding-left: 6px;
    margin-bottom: 11px;
}
.graph-select {
    width: 337px;
    height: 35px;
    display: flex;
    align-items: center;
    padding: 0 10px 0 5px;
    background: #fff;
    border: 1px solid #d4d4d4;
    color: #111;
}
.s-badge {
    width: 16px;
    height: 15px;
    margin-right: 2px;
    border: 1px solid #d00;
    font: 13px/13px "Liberation Mono", monospace;
    color: #00d;
    text-align: center;
}
.caret.push {
    margin-left: auto;
}
.tools {
    display: flex;
}
.tools.wide {
    margin-left: 1px;
}
.tools.second {
    margin-left: 3px;
}
.tool {
    width: 36.300px;
    height: 35px;
    flex: none;
    display: flex;
    align-items: center;
    justify-content: center;
}
.tools.wide .tool {
    width: 35px;
}
.tools.wide .tool.slot {
    width: 41px;
}
.tools.wide .tool.active {
    margin-left: 2px;
}
.tool svg {
    width: 24px;
    height: 24px;
}
.tool svg.tall {
    width: 25px;
    height: 31px;
}
.tool.active {
    background: linear-gradient(#ffe9a8, #ffd777);
    border: 1px solid #d6a94a;
    border-radius: 3px;
}
.tools.second .tool.active {
    width: 35px;
    margin: 0 -1px 0 2px;
}
.caret.after {
    margin: 0 0 6px 5px;
}

/* tree and work area */
.main {
    flex: 1;
    min-height: 0;
    display: flex;
    background: #fff;
}
.tree-pane {
    width: 151px;
    display: flex;
    flex-direction: column;
    font-size: 17px;
    background: #fff;
}
.tree {
    flex: 1;
    overflow: hidden;
    color: #111;
}
.tree-row {
    height: 28px;
    display: flex;
    align-items: center;
    white-space: nowrap;
    position: relative;
    overflow: hidden;
}
.lvl0 {
    padding-left: 3px;
}
.lvl1 {
    padding-left: 5px;
}
.lvl2 {
    padding-left: 24px;
}
.lvl3 {
    padding-left: 60px;
}
.lvl1::before,
.lvl2::before {
    content: "";
    position: absolute;
    left: 11px;
    top: 0;
    height: 7px;
    border-left: 1px dotted #555;
}
.lvl2::before {
    left: 30px;
}
.lvl3::before {
    content: "";
    position: absolute;
    left: 49px;
    top: 0;
    width: 11px;
    height: 15px;
    border-left: 1px dotted #555;
    border-bottom: 1px dotted #555;
}
.selected {
    background: linear-gradient(to right, #fff 79px, #eee 79px);
}
.node-icon {
    width: 18px;
    height: 15px;
    flex: none;
    margin-right: 4px;
}
.lvl1 .gap {
    width: 5px;
    flex: none;
}
.lvl2 .node-icon {
    margin-right: 3px;
}
.expander {
    width: 13px;
    height: 13px;
    flex: none;
    margin-right: 4px;
    position: relative;
    background: #eee;
    border: 1px solid #aaa;
}
.expander::after {
    content: "";
    position: absolute;
    left: 2px;
    top: 5px;
    width: 7px;
    height: 1px;
    background: #333;
}
.leaf-icon {
    width: 16px;
    height: 16px;
    flex: none;
    margin-right: 5px;
}
.hscroll {
    height: 26px;
    flex: none;
    margin-bottom: 1px;
    display: flex;
    border: 1px solid #d6d6d6;
    background: #fff;
}
.hs-btn {
    width: 25px;
    flex: none;
    display: flex;
    align-items: center;
    justify-content: center;
    border-right: 1px solid #d6d6d6;
}
.hs-btn:last-child {
    border-right: 0;
    border-left: 1px solid #d6d6d6;
}
.hs-arrow {
    width: 10px;
    height: 16px;
}
.hs-thumb {
    width: 27px;
    flex: none;
    display: flex;
    gap: 1px;
    align-items: center;
    justify-content: center;
    background: #cdcdcd;
}
.hs-thumb i {
    width: 3px;
    height: 12px;
    background: #666;
}
.hs-track {
    flex: 1;
}
.sash {
    width: 15px;
    flex: none;
    position: relative;
    background: linear-gradient(to right, #fff, #d0d0d0 70%, #8e8e8e);
}
.sash-mark {
    position: absolute;
    left: 2px;
    top: 2px;
    font: bold 14px "Liberation Mono", monospace;
    color: #111;
}
.work-col {
    flex: 1;
    display: flex;
    flex-direction: column;
    background: #eee;
}
.workspace {
    height: 770px;
    flex: none;
    padding: 3px 0 0 1px;
    background: #7f7f7f;
}
.doc {
    width: 1009px;
}
.chart {
    display: block;
    width: 1009px;
    height: 757px;
    background: #fffbf0;
}
.chart-text {
    font: 22px "Liberation Sans", Arial, sans-serif;
    fill: #0a0a0a;
}
.doc-bar {
    height: 9px;
    display: flex;
    align-items: center;
    padding-left: 450px;
    background: #bcbcbc;
}
.bar-tool {
    width: 16px;
    height: 8px;
}
.bar-tool.small {
    width: 8px;
    margin-left: 7px;
}
.bar-grad {
    width: 16px;
    height: 9px;
    margin: 0 9px 0 7px;
    background: linear-gradient(to right, #4b88c8, #dfe8f5);
}
.bar-slider {
    width: 208px;
    height: 2px;
    background: #333;
    position: relative;
}
.bar-slider::before {
    content: "";
    position: absolute;
    left: 0;
    top: -4px;
    width: 3px;
    height: 9px;
    background: #eee;
    border: 1px solid #666;
}
.bar-dots {
    width: 36px;
    display: flex;
    gap: 2px;
    justify-content: center;
}
.bar-dots i {
    width: 4px;
    height: 4px;
    border-radius: 50%;
    background: #6f9ad0;
}
.bar-end {
    width: 15px;
    height: 3px;
    margin-left: 11px;
    background: #333;
}
.bar-chev {
    width: 8px;
    height: 9px;
    margin-left: 5px;
}
.doc-tabs {
    flex: 1;
    display: flex;
    align-items: flex-end;
    margin-left: -2px;
    border-top: 2px solid #fff;
    padding-top: 3px;
    font: 15.850px "Liberation Sans", sans-serif;
    color: #111;
}
.doc-tab {
    height: 29px;
    padding-left: 4px;
    display: flex;
    align-items: center;
    width: 450px;
    white-space: nowrap;
    border-left: 1px solid #bbb;
}
.doc-tab .leaf-icon {
    margin: 0 7px 0 2px;
}
.doc-tab.active {
    width: 149px;
    padding-left: 5px;
    background: #fff;
    border: 1px solid #a0a0a8;
    border-bottom: 0;
}

/* bottom bars */
.task-bar {
    height: 28px;
    flex: none;
    display: flex;
    gap: 4px;
    padding: 2px 0 0 3px;
    background: linear-gradient(#e4e4f0, #d3d3e0);
    border-bottom: 2px solid #9a9a9a;
}
.task-btn {
    height: 24px;
    display: flex;
    align-items: center;
    background: #eeeef2;
    border: 1px solid #aaa;
}
.app-btn {
    width: 30px;
    justify-content: center;
    background: #e9e9ee;
}
.task-logo {
    width: 24px;
    height: 21px;
}
.results-btn {
    width: 160px;
    padding-left: 3px;
    font: bold 17px "Liberation Sans", sans-serif;
    color: #000;
}
.task-results {
    width: 25px;
    height: 22px;
    margin-right: 2px;
}
.status-bar {
    height: 25px;
    flex: none;
    display: flex;
    align-items: flex-start;
    padding-top: 3px;
    font: 16px "Liberation Sans", sans-serif;
    color: #444;
    background: #eee;
    border-bottom: 2px solid #222;
}
.status-text {
    margin: 3px auto 0 4px;
}
.status-cell {
    height: 20px;
    text-align: center;
    border: solid #a8a8a8;
    border-width: 1px 1px 0 1px;
    line-height: 20px;
    color: #333;
}
.status-cell.table {
    width: 214px;
    margin-right: 4px;
}
.status-cell.lock {
    color: #bcc0c4;
    border-color: #c6c6c6;
}
.cap {
    width: 40px;
    margin-right: 4px;
}
.num {
    width: 44px;
    margin-right: 3px;
}
.rec {
    width: 44px;
}
```
